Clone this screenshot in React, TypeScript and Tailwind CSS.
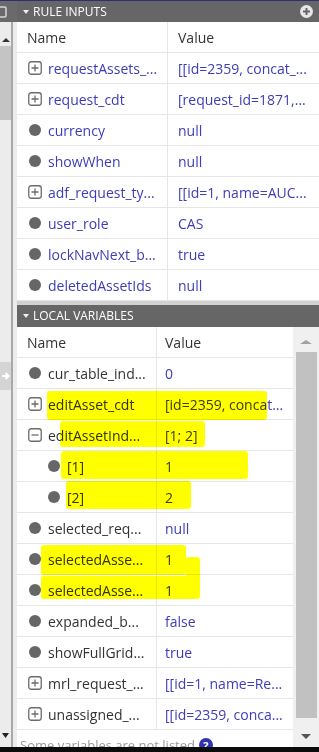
import React from "react";

type Icon = "plus" | "minus" | "dot";
interface RowData {
  icon: Icon;
  name: string;
  value: string;
  child?: boolean;
}

const rules: RowData[] = [
  { icon: "plus", name: "requestAssets_...", value: "[[id=2359, concat_..." },
  { icon: "plus", name: "request_cdt", value: "[request_id=1871,..." },
  { icon: "dot", name: "currency", value: "null" },
  { icon: "dot", name: "showWhen", value: "null" },
  { icon: "plus", name: "adf_request_ty...", value: "[[id=1, name=AUC..." },
  { icon: "dot", name: "user_role", value: "CAS" },
  { icon: "dot", name: "lockNavNext_b...", value: "true" },
  { icon: "dot", name: "deletedAssetIds", value: "null" },
];

const locals: RowData[] = [
  { icon: "dot", name: "cur_table_ind...", value: "0" },
  { icon: "plus", name: "editAsset_cdt", value: "[id=2359, concat..." },
  { icon: "minus", name: "editAssetInd...", value: "[1; 2]" },
  { icon: "dot", name: "[1]", value: "1", child: true },
  { icon: "dot", name: "[2]", value: "2", child: true },
  { icon: "dot", name: "selected_req...", value: "null" },
  { icon: "dot", name: "selectedAsse...", value: "1" },
  { icon: "dot", name: "selectedAsse...", value: "1" },
  { icon: "dot", name: "expanded_b...", value: "false" },
  { icon: "dot", name: "showFullGrid...", value: "true" },
  { icon: "plus", name: "mrl_request_...", value: "[[id=1, name=Re..." },
  { icon: "plus", name: "unassigned_...", value: "[[id=2359, conca..." },
];

function BoxIcon({ minus }: { minus?: boolean }) {
  return (
    <svg width="14" height="14" viewBox="0 0 14 14">
      <rect x="0.75" y="0.75" width="12.5" height="12.5" rx="2.5" fill="#fff" stroke="#6c6c6c" strokeWidth="1.3" />
      <path d={minus ? "M3.5 7h7" : "M3.5 7h7M7 3.5v7"} stroke="#6c6c6c" strokeWidth="1.3" />
    </svg>
  );
}

function Row({
  r,
  nameW,
  valPad,
  nameColor,
}: {
  r: RowData;
  nameW: string;
  valPad: string;
  nameColor: string;
}) {
  return (
    <div className="flex h-[31px] shrink-0 border-b border-[#e6e6e6]">
      <div
        className={`flex items-center gap-[6px] overflow-hidden border-r border-[#e6e6e6] ${nameW} ${
          r.child ? "pl-[30px]" : "pl-[11px]"
        }`}
      >
        <span className="flex h-[14px] w-[14px] shrink-0 items-center justify-center">
          {r.icon === "dot" ? (
            <span className="block h-[12px] w-[12px] rounded-full bg-[#666666]" />
          ) : (
            <BoxIcon minus={r.icon === "minus"} />
          )}
        </span>
        <span className={`whitespace-nowrap text-[14px] ${nameColor}`}>{r.name}</span>
      </div>
      <div className={`flex flex-1 items-center overflow-hidden whitespace-nowrap text-[14px] text-[#3d3db8] ${valPad}`}>
        {r.value}
      </div>
    </div>
  );
}

function HeadRow({ nameW, valPad }: { nameW: string; valPad: string }) {
  return (
    <div className="flex h-[31px] shrink-0 border-b border-[#e6e6e6] text-[14px] text-[#333333]">
      <div className={`flex items-center border-r border-[#e6e6e6] pl-[10px] ${nameW}`}>Name</div>
      <div className={`flex flex-1 items-center ${valPad}`}>Value</div>
    </div>
  );
}

function SectionHeader({ title, plus }: { title: string; plus?: boolean }) {
  return (
    <div className="flex h-[21px] shrink-0 items-center bg-[#666666] pl-[6px] pr-[6px] text-[12px] text-white">
      <svg width="6" height="4" viewBox="0 0 6 4" className="mr-[4px]">
        <path d="M0 0h6L3 4z" fill="#f0f0f0" />
      </svg>
      <span className="leading-none">{title}</span>
      <span className="flex-1" />
      {plus && (
        <svg width="13" height="13" viewBox="0 0 13 13">
          <circle cx="6.5" cy="6.5" r="6.5" fill="#e6e6e6" />
          <path d="M6.5 3v7M3 6.5h7" stroke="#666666" strokeWidth="2" />
        </svg>
      )}
    </div>
  );
}

export default function App() {
  return (
    <div
      className="relative flex h-[752px] w-[319px] flex-col overflow-hidden bg-white"
      style={{ fontFamily: "'Open Sans', 'Noto Sans', sans-serif" }}
    >
      <div className="h-[1px] shrink-0 bg-[#2e2e78]" />
      <div className="flex min-h-0 flex-1">
        {/* left strip */}
        <div className="flex w-[17px] shrink-0 flex-col">
          <div className="flex h-[21px] shrink-0 items-center bg-[#6a6a6a]">
            <svg width="11" height="21" viewBox="0 0 11 21">
              <rect x="-3" y="6" width="9" height="10" rx="1.5" fill="none" stroke="#d8d8d8" strokeWidth="1.5" />
            </svg>
          </div>
          <div className="flex min-h-0 flex-1">
            <div className="flex w-[11px] flex-col bg-[#ececec]">
              <div className="flex h-[24px] shrink-0 items-end justify-center pb-[4px]">
                <svg width="8" height="4" viewBox="0 0 8 4">
                  <path d="M0 4h8L4 0z" fill="#333333" />
                </svg>
              </div>
              <div className="h-[74px] shrink-0 bg-[#c4c4c4]" />
              <div className="mt-[242px] flex h-[28px] shrink-0 items-center justify-center bg-[#d4d4d4]">
                <svg width="10" height="10" viewBox="0 0 10 10">
                  <path d="M1 5h6M4.5 2l3 3-3 3" fill="none" stroke="#ffffff" strokeWidth="2" />
                </svg>
              </div>
              <div className="flex-1" />
              <div className="flex h-[14px] shrink-0 items-start justify-center">
                <svg width="7" height="5" viewBox="0 0 7 5">
                  <path d="M0 0h7L3.5 5z" fill="#222222" />
                </svg>
              </div>
            </div>
            <div className="w-[2px] bg-[#a9a9a9]" />
            <div className="w-[4px] bg-[#ececec]" />
          </div>
        </div>

        {/* main column */}
        <div className="flex min-w-0 flex-1 flex-col">
          <SectionHeader title="RULE INPUTS" plus />
          <HeadRow nameW="w-[151px]" valPad="pl-[10px]" />
          {rules.map((r, i) => (
            <Row key={i} r={r} nameW="w-[151px]" valPad="pl-[10px]" nameColor="text-[#3d3db8]" />
          ))}
          <div className="h-[4px] shrink-0 bg-[#d2d2d2]" />
          <div className="h-[22px] shrink-0">
            <div className="flex h-[22px] items-center bg-[#666666] pl-[6px] text-[12px] text-white">
              <svg width="6" height="4" viewBox="0 0 6 4" className="mr-[4px]">
                <path d="M0 0h6L3 4z" fill="#f0f0f0" />
              </svg>
              <span className="leading-none">LOCAL VARIABLES</span>
            </div>
          </div>
          <div className="flex min-h-0 flex-1">
            <div className="flex w-[276px] shrink-0 flex-col">
              <HeadRow nameW="w-[140px]" valPad="pl-[8px]" />
              {locals.map((r, i) => (
                <Row key={i} r={r} nameW="w-[140px]" valPad="pl-[8px]" nameColor="text-[#333333]" />
              ))}
              <div className="flex items-center gap-[4px] pl-[3px] pt-[6px] text-[13px] leading-[18px] text-[#999999]">
                <span className="whitespace-nowrap">Some variables are not listed</span>
                <span className="flex h-[14px] w-[14px] items-center justify-center rounded-full bg-[#3333b0] text-[11px] font-bold leading-none text-white">
                  ?
                </span>
              </div>
            </div>
            {/* scrollbar */}
            <div className="flex flex-1 flex-col bg-[#f0f0f0]">
              <div className="flex h-[25px] shrink-0 items-end justify-center pb-[8px]">
                <svg width="12" height="4" viewBox="0 0 12 4">
                  <path d="M0 4h12L6 0z" fill="#a3a3a3" />
                </svg>
              </div>
              <div className="ml-[3px] mr-[2px] h-[366px] shrink-0 bg-[#c1c1c1]" />
              <div className="flex flex-1 items-start justify-center pt-[16px]">
                <svg width="10" height="5" viewBox="0 0 10 5">
                  <path d="M0 0h10L5 5z" fill="#555555" />
                </svg>
              </div>
            </div>
          </div>
        </div>
      </div>
      <div className="h-[5px] shrink-0 bg-[#0c0c0c]" />

      {/* yellow marker highlights */}
      <div className="pointer-events-none absolute left-[47px] top-[391px] h-[29px] w-[220px] rounded-[3px] bg-[#ffff00] mix-blend-multiply" />
      <div className="pointer-events-none absolute left-[60px] top-[421px] h-[26px] w-[145px] rounded-[3px] bg-[#ffff00] mix-blend-multiply" />
      <div className="pointer-events-none absolute left-[61px] top-[451px] h-[28px] w-[187px] rounded-[3px] bg-[#ffff00] mix-blend-multiply" />
      <div className="pointer-events-none absolute left-[66px] top-[481px] h-[28px] w-[125px] rounded-[3px] bg-[#ffff00] mix-blend-multiply" />
      <div className="pointer-events-none absolute left-[41px] top-[545px] h-[30px] w-[145px] rounded-[3px] bg-[#ffff00] mix-blend-multiply" />
      <div className="pointer-events-none absolute left-[186px] top-[557px] h-[26px] w-[14px] rounded-[3px] bg-[#ffff00] mix-blend-multiply" />
      <div className="pointer-events-none absolute left-[41px] top-[576px] h-[23px] w-[159px] rounded-[3px] bg-[#ffff00] mix-blend-multiply" />
    </div>
  );
}
